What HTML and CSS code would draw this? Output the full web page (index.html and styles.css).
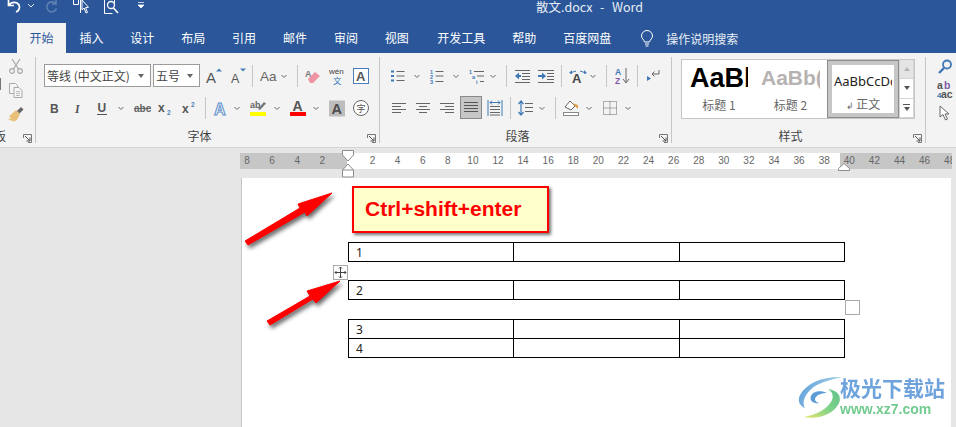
FILE: index.html
```html
<html>
  <head>
    <meta charset="utf-8" />
    <title>散文.docx - Word</title>
    <link rel="stylesheet" href="styles.css">
  </head>
  <body>
    <svg class="sprite">
      <symbol id="caret" viewBox="0 0 16 16"><path d="M5.500 7l2.500 2.500L10.500 7" fill="none" stroke="#666" stroke-width="1"/></symbol>
      <symbol id="launcher" viewBox="0 0 9 9"><path d="M.5 4V.5h8v8H5" fill="none" stroke="#777"/><path d="M2 2l5 5M7 3.500V7H3.500" fill="none" stroke="#555"/></symbol>
      <symbol id="lines-left" viewBox="0 0 16 16"><path d="M1 3.500h14M1 6.500h9M1 9.500h14M1 12.500h9" stroke="#666" fill="none"/></symbol>
      <symbol id="lines-center" viewBox="0 0 16 16"><path d="M1 3.500h14M4 6.500h8M1 9.500h14M4 12.500h8" stroke="#666" fill="none"/></symbol>
      <symbol id="lines-right" viewBox="0 0 16 16"><path d="M1 3.500h14M6 6.500h9M1 9.500h14M6 12.500h9" stroke="#666" fill="none"/></symbol>
    </svg>

    <!-- title bar -->
    <div class="titlebar">
      <div class="quick">
        <svg class="qa" width="16" height="14" viewBox="0 0 16 14"><path d="M2.500 0v5.500H8M3 5C5.500 1.500 11 1.500 13 5c1.500 3-.5 6-3 7" fill="none" stroke="#fff" stroke-width="1.700"/></svg>
        <svg class="qa caret-w" width="8" height="14" viewBox="0 0 8 14"><path d="M1 4l3 3 3-3" fill="none" stroke="#dfe6f1"/></svg>
        <svg class="qa redo" width="14" height="14" viewBox="0 0 14 14"><path d="M11 0v4H7M10.500 3.500a5 5 0 1 0 1 5" fill="none" stroke="#5f80b4" stroke-width="1.600"/></svg>
        <svg class="qa touch" width="18" height="15" viewBox="0 0 18 15"><path d="M1.500 0v4.500h5V0M8.500 0v13M10 0l0 10 2-2 2 5 1.500-.6-2-4.800 3-.3z" fill="none" stroke="#fff"/></svg>
        <svg class="qa preview" width="17" height="15" viewBox="0 0 17 15"><path d="M1.500 0v13.500h8M11.500 0v3" fill="none" stroke="#fff"/><circle cx="8" cy="5" r="3.500" fill="none" stroke="#fff" stroke-width="1.300"/><path d="M10.500 8l4.500 5" stroke="#fff" stroke-width="1.600"/></svg>
        <svg class="qa more" width="8" height="10" viewBox="0 0 8 10"><path d="M1 2.500h6M1 5h6l-3 3z" fill="#fff" stroke="#fff" stroke-width=".7"/></svg>
      </div>
      <div class="doc-name">散文.docx &nbsp;-&nbsp; Word</div>
    </div>

    <!-- tabs -->
    <div class="tabs">
      <span class="tab active">开始</span>
      <span class="tab">插入</span>
      <span class="tab">设计</span>
      <span class="tab">布局</span>
      <span class="tab">引用</span>
      <span class="tab">邮件</span>
      <span class="tab">审阅</span>
      <span class="tab">视图</span>
      <span class="tab wide">开发工具</span>
      <span class="tab help">帮助</span>
      <span class="tab wide">百度网盘</span>
      <svg class="bulb" width="14" height="17" viewBox="0 0 14 17"><path d="M4.500 12C4 9.500 1.500 8.500 1.500 6a5.500 5.500 0 0 1 11 0c0 2.500-2.500 3.500-3 6zM5 14h4M5.500 16h3" fill="none" stroke="#fff"/></svg>
      <span class="tell-me">操作说明搜索</span>
    </div>

    <!-- ribbon -->
    <div class="ribbon">
      <section class="group clipboard">
        <div class="clip-stack">
          <svg width="16" height="16" viewBox="0 0 16 16"><path d="M4 1l6.500 10M12 1L5.500 11" stroke="#a9a9a9" stroke-width="1.300" fill="none"/><circle cx="4" cy="13" r="2.300" fill="none" stroke="#a9a9a9" stroke-width="1.200"/><circle cx="12" cy="13" r="2.300" fill="none" stroke="#a9a9a9" stroke-width="1.200"/></svg>
          <svg width="16" height="16" viewBox="0 0 16 16"><path d="M1.500 1.500h6l2 2v2M1.500 1.500v10h4M6 5.500h5l3 3v7H6z" fill="#f7f7f7" stroke="#aaa"/><path d="M8 9.500h4M8 11.500h4M8 13.500h4" stroke="#bbb"/></svg>
          <svg width="16" height="16" viewBox="0 0 16 16"><path d="M8 4l4 4-3 6-3 1.500-6-2 3-1.500-2-1.500z" fill="#e8c078"/><path d="M9 5l4-4 2.500 2.500-4 4z" fill="#666"/></svg>
        </div>
        <span class="cut-label">板</span>
        <svg class="launcher"><use href="#launcher"/></svg>
      </section>

      <section class="group font-group">
        <div class="tools font-row-1">
          <div class="combo"><span>等线 (中文正文)</span><i class="combo-arrow"></i></div>
          <div class="combo"><span>五号</span><i class="combo-arrow"></i></div>
          <svg width="16" height="16" viewBox="0 0 16 16"><text x="0" y="15" class="plain" font-size="15" fill="#555">A</text><path d="M10 3.500l3-3 3 3z" fill="#4a7ebb"/></svg>
          <svg width="16" height="16" viewBox="0 0 16 16"><text x="1" y="15" class="plain" font-size="12.500" fill="#555">A</text><path d="M10 .5h6l-3 3z" fill="#4a7ebb"/></svg>
          <i class="sep"></i>
          <svg width="16" height="16" viewBox="0 0 16 16"><text x="0" y="13" class="plain" font-size="13.500" fill="#666">Aa</text></svg>
          <svg width="16" height="16"><use href="#caret"/></svg>
          <i class="sep"></i>
          <svg width="16" height="16" viewBox="0 0 16 16"><text x="0" y="9" class="glyph" font-size="9" fill="#777">A</text><path d="M3 11l7-7 5 4-7 7H5z" fill="#ee93a3"/></svg>
          <svg width="18" height="18" viewBox="0 0 18 18"><text x="0" y="7" class="plain" font-size="8" fill="#444">wén</text><text x="4" y="17" class="cjk" font-size="8.500" fill="#2f75b5">文</text></svg>
          <svg width="16" height="16" viewBox="0 0 16 16"><rect x=".5" y=".5" width="15" height="15" fill="#fff" stroke="#4a7ebb"/><text x="3" y="13" class="glyph" font-size="13" fill="#555">A</text></svg>
        </div>
        <div class="tools font-row-2">
          <svg width="16" height="16" viewBox="0 0 16 16"><text x="4" y="13" class="glyph" font-size="12" fill="#555">B</text></svg>
          <svg width="16" height="16" viewBox="0 0 16 16"><text x="5" y="13" class="glyph-i" font-size="12" fill="#555">I</text></svg>
          <svg width="16" height="16" viewBox="0 0 16 16"><text x="3.500" y="12" class="glyph" font-size="12" fill="#555">U</text><path d="M3 14.500h10" stroke="#555"/></svg>
          <svg width="16" height="16"><use href="#caret"/></svg>
          <svg width="18" height="16" viewBox="0 0 18 16"><text x="0" y="12" class="glyph" font-size="10" fill="#666">abc</text><path d="M0 8.500h17" stroke="#666"/></svg>
          <svg width="16" height="16" viewBox="0 0 16 16"><text x="1" y="12" class="glyph" font-size="12" fill="#555">x</text><text x="10" y="15" class="glyph" font-size="6.500" fill="#4a7ebb">2</text></svg>
          <svg width="16" height="16" viewBox="0 0 16 16"><text x="1" y="13" class="glyph" font-size="12" fill="#555">x</text><text x="10" y="7" class="glyph" font-size="6.500" fill="#4a7ebb">2</text></svg>
          <i class="sep"></i>
          <svg width="16" height="16" viewBox="0 0 16 16"><text x="1" y="14.500" class="glyph" font-size="16" fill="#fff" stroke="#5b8ec9" stroke-width="1">A</text></svg>
          <svg width="16" height="16"><use href="#caret"/></svg>
          <svg width="16" height="18" viewBox="0 0 16 18"><rect y="13" width="16" height="4" fill="#ff0"/><text x="0" y="9" class="glyph" font-size="9" fill="#666">ab</text><path d="M8 10l6-7 2 1.500-6 6.500z" fill="#777"/></svg>
          <svg width="16" height="16"><use href="#caret"/></svg>
          <svg width="16" height="18" viewBox="0 0 16 18"><rect y="13" width="16" height="4" fill="#f00"/><text x="2.500" y="12" class="glyph" font-size="14" fill="#555">A</text></svg>
          <svg width="16" height="16"><use href="#caret"/></svg>
          <svg width="16" height="16" viewBox="0 0 16 16"><rect width="16" height="16" y=".5" fill="#bdbdbd"/><text x="2.500" y="14" class="glyph" font-size="14.500" fill="#4d4d4d">A</text></svg>
          <svg width="16" height="16" viewBox="0 0 16 16"><circle cx="8" cy="8" r="7.500" fill="#fff" stroke="#666"/><text x="3.500" y="12" class="cjk" font-size="9" fill="#555">字</text></svg>
        </div>
        <div class="group-label">字体</div>
        <svg class="launcher"><use href="#launcher"/></svg>
      </section>

      <section class="group para-group">
        <div class="tools para-row-1">
          <svg width="16" height="16" viewBox="0 0 16 16"><path d="M1 2.500h3v2H1zM1 7h3v2H1zM1 11.500h3v2H1z" fill="#3f78b5"/><path d="M6.500 3.500h8M6.500 8h8M6.500 12.500h8" stroke="#666"/></svg>
          <svg width="16" height="16"><use href="#caret"/></svg>
          <svg width="16" height="16" viewBox="0 0 16 16"><text x="1" y="6" class="num" fill="#3f78b5">1</text><text x="1" y="11" class="num" fill="#3f78b5">2</text><text x="1" y="16" class="num" fill="#3f78b5">3</text><path d="M6.500 3.500h8M6.500 8h8M6.500 13.500h8" stroke="#666"/></svg>
          <svg width="16" height="16"><use href="#caret"/></svg>
          <svg width="16" height="16" viewBox="0 0 16 16"><text x="0" y="6" class="num" fill="#3f78b5">1</text><text x="3" y="11" class="num" fill="#3f78b5">a</text><text x="7" y="16" class="num" fill="#3f78b5">i</text><path d="M5 3.500h10M8 8h7M11 13.500h4" stroke="#666"/></svg>
          <svg width="16" height="16"><use href="#caret"/></svg>
          <i class="sep"></i>
          <svg width="16" height="16" viewBox="0 0 16 16"><path d="M1 8l4-3.500v7z" fill="#3f78b5"/><path d="M4 8h3" stroke="#3f78b5" stroke-width="2"/><path d="M1 2.500h15M8 5.500h8M8 8.500h8M8 11.500h8M1 14.500h15" stroke="#666"/></svg>
          <svg width="16" height="16" viewBox="0 0 16 16"><path d="M7 8L3 4.500v7z" transform="translate(1)" fill="#3f78b5"/><path d="M0 8h4" stroke="#3f78b5" stroke-width="2"/><path d="M0 2.500h16M9 5.500h7M9 8.500h7M9 11.500h7M0 14.500h16" stroke="#666"/></svg>
          <i class="sep"></i>
          <svg width="18" height="16" viewBox="0 0 18 16"><text x="3" y="15" class="glyph" font-size="13" fill="#444">A</text><path d="M1 5l6-2M17 5l-6-2" stroke="#3f78b5" fill="none"/><path d="M0 5l3-3v4zM18 5l-3-3v4z" fill="#3f78b5"/></svg>
          <svg width="16" height="16"><use href="#caret"/></svg>
          <i class="sep"></i>
          <svg width="16" height="18" viewBox="0 0 16 18"><text x="1" y="8" class="glyph" font-size="8.500" fill="#3f78b5">A</text><text x="1" y="17" class="glyph" font-size="8.500" fill="#7f57a6">Z</text><path d="M12 1v14M9 12l3 4 3-4" stroke="#666" fill="none"/></svg>
          <i class="sep"></i>
          <svg width="16" height="16" viewBox="0 0 16 16"><path d="M14 2v4H7M9.500 3.500L7 6l2.500 2.500" stroke="#666" fill="none"/><path d="M2 13l4-2.500-4-2.500z" fill="#3f78b5"/></svg>
        </div>
        <div class="tools para-row-2">
          <svg width="16" height="16"><use href="#lines-left"/></svg>
          <svg width="16" height="16"><use href="#lines-center"/></svg>
          <svg width="16" height="16"><use href="#lines-right"/></svg>
          <svg class="selected-align" width="22" height="23" viewBox="0 0 22 23"><rect x=".5" y=".5" width="21" height="22" fill="#c6c6c6" stroke="#8a8a8a"/><path d="M4 6.500h14M4 9.500h14M4 12.500h14M4 15.500h14" stroke="#555"/></svg>
          <svg width="16" height="16" viewBox="0 0 16 16"><path d="M1 0v16M15 0v16" stroke="#3f78b5"/><path d="M3 2.500h10M3 2.500l2-2M3 2.500l2 2M13 2.500l-2-2M13 2.500l-2 2" stroke="#3f78b5" fill="none"/><path d="M3 6.500h10M3 9.500h10M3 12.500h10M3 15h10" stroke="#666"/></svg>
          <i class="sep"></i>
          <svg width="16" height="16" viewBox="0 0 16 16"><path d="M3 1v14M.5 4L3 1l2.500 3M.5 12L3 15l2.500-3" stroke="#3f78b5" fill="none" stroke-width="1.200"/><path d="M7 3.500h8M7 7.500h8M7 11.500h8" stroke="#666"/></svg>
          <svg width="16" height="16"><use href="#caret"/></svg>
          <i class="sep"></i>
          <svg width="16" height="18" viewBox="0 0 16 18"><rect x=".5" y="13.500" width="15" height="3" fill="#fff" stroke="#888"/><path d="M2 8l5-6 5 5-4 4z" fill="#fff" stroke="#666"/><path d="M9 4l4 4 2 2V6z" fill="#e3a04c"/></svg>
          <svg width="16" height="16"><use href="#caret"/></svg>
          <svg width="14" height="14" viewBox="0 0 14 14"><path d="M.5.500h13v13H.5zM7 .5v13M.5 7h13" fill="none" stroke="#666" stroke-dasharray="1 1"/></svg>
          <svg width="16" height="16"><use href="#caret"/></svg>
        </div>
        <div class="group-label">段落</div>
        <svg class="launcher"><use href="#launcher"/></svg>
      </section>

      <section class="group styles-group">
        <div class="gallery">
          <div class="style-item heading-1">
            <div class="sample">AaBb</div>
            <div class="caption">标题 1</div>
          </div>
          <div class="style-item heading-2">
            <div class="sample">AaBb(</div>
            <div class="caption">标题 2</div>
          </div>
          <div class="style-item normal">
            <div class="sample">AaBbCcDd</div>
            <div class="caption"><span class="para-mark">↲</span> 正文</div>
          </div>
          <div class="gallery-scroll">
            <span class="scroll-btn off"><i class="up"></i></span>
            <span class="scroll-btn"><i class="down"></i></span>
            <span class="scroll-btn more"><i class="down"></i></span>
          </div>
        </div>
        <div class="group-label">样式</div>
        <svg class="launcher"><use href="#launcher"/></svg>
      </section>

      <section class="group editing">
        <div class="clip-stack">
          <svg width="16" height="16" viewBox="0 0 16 16"><circle cx="10" cy="5.500" r="4" fill="none" stroke="#3f78b5" stroke-width="1.800"/><path d="M7 9l-5 5" stroke="#3f78b5" stroke-width="2.400"/></svg>
          <svg width="16" height="18" viewBox="0 0 16 18"><text x="0" y="8" class="glyph" font-size="10.500" fill="#555">a</text><text x="7" y="8" class="glyph" font-size="10.500" fill="#7f57a6">b</text><text x="0" y="17" class="glyph" font-size="8" fill="#3f78b5">4</text><text x="4" y="17" class="glyph" font-size="10.500" fill="#555">ac</text></svg>
          <svg width="14" height="16" viewBox="0 0 14 16"><path d="M2 1v11l3-2.500 2.500 5.500 2-1-2.500-5h4z" fill="#fff" stroke="#666"/></svg>
        </div>
      </section>
    </div>

    <!-- document area -->
    <div class="workspace">
      <div class="ruler-wrap">
        <div class="ruler">
          <span>8</span><span>6</span><span>4</span><span>2</span><span></span>
          <span>2</span><span>4</span><span>6</span><span>8</span><span>10</span><span>12</span>
          <span>14</span><span>16</span><span>18</span><span>20</span><span>22</span><span>24</span>
          <span>26</span><span>28</span><span>30</span><span>32</span><span>34</span><span>36</span>
          <span>38</span><span>40</span><span>42</span><span>44</span><span>46</span><span>48</span>
        </div>
        <svg class="indent-marker" width="12" height="28" viewBox="0 0 12 28"><path d="M.5.500h11V5L6 11 .5 5zM6 14l5.500 6v7H.5v-7zM.5 20h11" fill="#fff" stroke="#8d8d8d"/></svg>
        <svg class="right-marker" width="12" height="8" viewBox="0 0 12 8"><path d="M6 .5l5.500 5v2H.5v-2z" fill="#fff" stroke="#8d8d8d"/></svg>
      </div>

      <div class="page">
        <table class="word-table first">
          <tr><td>1</td><td></td><td></td></tr>
        </table>
        <table class="word-table second">
          <tr><td>2</td><td></td><td></td></tr>
        </table>
        <table class="word-table third">
          <tr><td>3</td><td></td><td></td></tr>
          <tr><td>4</td><td></td><td></td></tr>
        </table>

        <div class="callout">Ctrl+shift+enter</div>
        <div class="move-handle">
          <svg width="11" height="11" viewBox="0 0 11 11"><path d="M5.500 0v11M0 5.500h11M4 1.500L5.500 0 7 1.500M4 9.500L5.500 11 7 9.500M1.500 4L0 5.500 1.500 7M9.500 4L11 5.500 9.500 7" fill="none" stroke="#444"/></svg>
        </div>
        <div class="resize-handle"></div>

        <div class="watermark">
          <svg class="swirl" width="46" height="44" viewBox="0 0 46 44">
            <defs>
              <linearGradient id="sweep" x1="0" y1="0" x2="1" y2="0.300">
                <stop offset="0" stop-color="#5b9bd8"/>
                <stop offset="1" stop-color="#a9d6e8"/>
              </linearGradient>
              <linearGradient id="leaf" x1="0" y1="1" x2="1" y2="0">
                <stop offset="0" stop-color="#e6e66a"/>
                <stop offset="0.500" stop-color="#7fd28a"/>
                <stop offset="1" stop-color="#5fc28a"/>
              </linearGradient>
            </defs>
            <path d="M45 1C28 0 10 6 3 19c-3 6 0 11 5 13C4 26 9 15 20 9 28 5 37 3 45 1z" fill="url(#sweep)"/>
            <path d="M7 41c14 3 30-3 35-14 3-7-2-13-11-14 5 3 6 8 3 13-5 8-16 13-27 15z" fill="url(#leaf)"/>
            <path d="M30 17c-6-3-14-2-16 3s3 8 8 7c-4-1-5-4-3-6 2-3 7-4 11-4z" fill="#5d9bd6"/>
          </svg>
          <div class="wm-text">
            <div class="wm-name">极光下载站</div>
            <div class="wm-url">www.xz7.com</div>
          </div>
        </div>
      </div>

      <svg class="arrows" width="956" height="279" viewBox="0 148 956 279">
        <polygon points="245,241 300,208 298,204 332,193 307,216 305,212 248,245" />
        <polygon points="267,321 310,296 307,291 340,281 316,303 313,299 270,325" />
      </svg>
    </div>
  </body>
</html>
```

FILE: styles.css
```css
* {
  box-sizing: border-box;
}

html,
body {
  margin: 0;
  height: 427px;
  overflow: hidden;
}

body {
  font-family: "Noto Sans CJK SC", "Liberation Sans", sans-serif;
  font-size: 12px;
  background: #e6e6e6;
}

.sprite {
  display: none;
}

svg {
  display: block;
  overflow: visible;
}

.glyph {
  font-family: "Liberation Sans", sans-serif;
  font-weight: bold;
}

.glyph-i {
  font-family: "Liberation Serif", serif;
  font-style: italic;
  font-weight: bold;
}

.plain {
  font-family: "Liberation Sans", sans-serif;
}

.cjk {
  font-family: "Noto Sans CJK SC", sans-serif;
}

.num {
  font-family: "Liberation Sans", sans-serif;
  font-size: 5.5px;
  font-weight: bold;
}

/* title bar */
.titlebar {
  height: 23px;
  background: #2b579a;
  color: #fff;
  position: relative;
  overflow: hidden;
}

.quick {
  display: flex;
  align-items: flex-start;
  padding-left: 6px;
}

.qa.caret-w {
  margin-left: 5px;
}

.qa.redo {
  margin-left: 10px;
}

.qa.touch {
  margin-left: 13px;
}

.qa.preview {
  margin-left: 13px;
}

.qa.more {
  margin-left: 17px;
}

.doc-name {
  position: absolute;
  top: -2px;
  left: 536px;
  line-height: 17px;
  font-size: 12.5px;
  word-spacing: 1px;
  color: #e8edf5;
}

/* tabs */
.tabs {
  height: 30px;
  background: #2b579a;
  display: flex;
  align-items: center;
  padding-left: 17px;
}

.tab {
  width: 50.9px;
  height: 30px;
  line-height: 29px;
  text-align: center;
  color: #fff;
  font-size: 12px;
}

.tab.active {
  width: 49px;
  background: #f3f3f3;
  color: #2b579a;
}

.tab.wide {
  width: 78px;
}

.tab.help {
  width: 48px;
}

.bulb {
  margin-left: 14px;
  margin-right: 12px;
}

.tell-me {
  color: #e8edf5;
  font-size: 12px;
}

/* ribbon */
.ribbon {
  height: 95px;
  background: #f3f3f3;
  border-bottom: 1px solid #d4d4d4;
  display: flex;
  padding-top: 4px;
}

.group {
  position: relative;
  flex: none;
  height: 86px;
  border-right: 1px solid #c6c6c6;
  padding-top: 7px;
}

.clipboard {
  width: 36px;
  padding-top: 1px;
}

/* edge of the paste button, scrolled out of view */
.clipboard::before {
  content: "";
  position: absolute;
  left: 0;
  top: 21px;
  width: 1px;
  height: 12px;
  background: #777;
}

.font-group {
  width: 344px;
}

.para-group {
  width: 292px;
}

.styles-group {
  width: 254px;
  padding-top: 2px;
}

.editing {
  width: 30px;
  border-right: 0;
  padding-top: 0;
}

.clip-stack {
  display: flex;
  flex-direction: column;
  align-items: center;
  gap: 8px;
  width: 32px;
}

.editing .clip-stack {
  margin-left: 3px;
  padding-top: 2px;
  gap: 6px;
}

.cut-label {
  position: absolute;
  left: -6px;
  bottom: -1px;
  line-height: 16px;
  color: #444;
}

.launcher {
  position: absolute;
  width: 9px;
  height: 9px;
  right: 3px;
  bottom: 0;
}

.tools {
  display: grid;
  grid-auto-flow: column;
  justify-content: start;
  align-items: center;
  height: 23px;
}

.font-row-1 {
  margin-left: 8px;
  grid-template-columns: 109px 53px 24px 14px 16px 16px 13px 16px 24px 24px 16px;
}

.font-row-2 {
  margin-left: 10px;
  margin-top: 9px;
  grid-template-columns: 24px 24px 19px 21px 23px 24px 16px 16px 16px 21px 19px 21px 18px 21px 24px 16px;
}

.para-row-1 {
  margin-left: 10px;
  grid-template-columns: 19px 20px 19px 21px 16px 13px 16px 24px 15px 16px 16px 13px 16px 15px 16px 16px;
}

.para-row-2 {
  margin-left: 11px;
  margin-top: 9px;
  grid-template-columns: 24px 24px 21px 27px 15px 16px 16px 13px 16px 18px 22px 17px 16px;
}

.sep {
  display: block;
  width: 1px;
  height: 22px;
  margin-left: 8px;
  background: #c6c6c6;
}

.combo {
  display: flex;
  align-items: center;
  justify-content: space-between;
  height: 23px;
  padding: 0 6px 0 2px;
  background: #fff;
  border: 1px solid #9b9b9b;
  color: #444;
  font-size: 12px;
  white-space: nowrap;
}

.font-row-1 .combo:nth-child(1) {
  width: 107px;
}

.font-row-1 .combo:nth-child(2) {
  width: 47px;
}

.combo-arrow {
  width: 0;
  height: 0;
  border: 3.5px solid transparent;
  border-top: 4px solid #666;
  border-bottom: 0;
}

.group-label {
  position: absolute;
  left: 0;
  right: 16px;
  top: 71px;
  line-height: 16px;
  text-align: center;
  color: #444;
}

/* style gallery */
.gallery {
  display: flex;
  width: 234px;
  height: 60px;
  margin-left: 9px;
  background: #fff;
  border: 1px solid #c6c6c6;
}

.style-item {
  height: 58px;
  overflow: hidden;
  text-align: center;
}

.sample {
  font-family: "Liberation Sans", sans-serif;
  white-space: nowrap;
  overflow: hidden;
  text-align: left;
}

.caption {
  color: #666;
  font-size: 12px;
  line-height: 16px;
}

.heading-1 {
  width: 78px;
  padding-left: 8px;
}

.heading-1 .sample {
  width: 58px;
  height: 36px;
  padding-top: 2px;
  font-size: 27px;
  line-height: 32px;
  font-weight: bold;
  color: #000;
}

.heading-1 .caption {
  width: 58px;
  margin-top: 1px;
}

.heading-2 {
  width: 67px;
  padding-left: 1px;
}

.heading-2 .sample {
  width: 59px;
  height: 36px;
  padding-top: 3px;
  font-size: 21px;
  line-height: 30px;
  font-weight: bold;
  color: #b7b2b2;
}

.heading-2 .caption {
  width: 59px;
  margin-top: 1px;
}

.normal {
  width: 72px;
  border: 1px solid #8c8c8c;
  outline: 4px solid #c6c6c6;
  outline-offset: -5px;
  padding: 5px 6px 0;
}

.normal .sample {
  width: 58px;
  height: 30px;
  font-family: "Noto Sans", sans-serif;
  font-size: 13px;
  line-height: 30px;
  color: #222;
}

.para-mark {
  font-size: 9px;
}

.gallery-scroll {
  width: 15px;
  display: flex;
  flex-direction: column;
  margin-left: auto;
}

.scroll-btn {
  flex: 1;
  display: flex;
  align-items: center;
  justify-content: center;
  border: 1px solid #d4d4d4;
  border-top: 0;
}

.scroll-btn.off {
  background: #e4e4e4;
}

.scroll-btn i {
  width: 0;
  height: 0;
  border: 3.5px solid transparent;
}

.scroll-btn .up {
  border-bottom: 4px solid #b5b5b5;
  border-top: 0;
}

.scroll-btn .down {
  border-top: 4px solid #555;
  border-bottom: 0;
}

.scroll-btn.more {
  flex-direction: column;
  gap: 2px;
}

.scroll-btn.more::before {
  content: "";
  width: 7px;
  height: 1px;
  background: #555;
}

/* ruler and page */
.workspace {
  position: relative;
  height: 279px;
}

.ruler-wrap {
  position: relative;
  padding-top: 5px;
}

.ruler {
  display: flex;
  height: 16px;
  margin-left: 240px;
  width: 712px;
  overflow: hidden;
  background: linear-gradient(to right, #c6c6c6 107px, #fff 107px, #fff 600px, #c6c6c6 600px);
  font-family: "Liberation Sans", sans-serif;
  font-size: 10px;
  line-height: 16px;
  color: #666;
}

.ruler span {
  flex: 0 0 25.1px;
  text-align: center;
}

.ruler span:first-child {
  margin-left: -5.5px;
}

.indent-marker {
  position: absolute;
  left: 342px;
  top: 2px;
}

.right-marker {
  position: absolute;
  left: 838px;
  top: 15px;
}

.page {
  position: relative;
  width: 710px;
  height: 249px;
  margin-left: 241px;
  margin-top: 9px;
  padding-top: 64px;
  padding-left: 106px;
  background: #fff;
  border-left: 1px solid #c6c6c6;
  overflow: hidden;
}

.word-table {
  width: 497px;
  table-layout: fixed;
  border-collapse: collapse;
  font-family: "Noto Sans", sans-serif;
  font-size: 12px;
  color: #222;
}

.word-table td {
  height: 19px;
  padding: 0 0 0 7px;
  line-height: 17px;
  border: 1px solid #000;
}

.word-table.second {
  margin-top: 18px;
}

.word-table.third {
  margin-top: 19px;
}

.callout {
  position: absolute;
  left: 110px;
  top: 8px;
  width: 197px;
  height: 47px;
  padding-left: 11px;
  background: #ffffcc;
  border: 2px solid #f00;
  box-shadow: 2px 2px 3px rgba(0, 0, 0, 0.55);
  color: #f00;
  font-family: "Liberation Sans", sans-serif;
  font-size: 21px;
  font-weight: bold;
  line-height: 41px;
}

.move-handle {
  position: absolute;
  left: 91px;
  top: 87px;
  width: 15px;
  height: 15px;
  display: flex;
  align-items: center;
  justify-content: center;
  background: #fff;
  border: 1px solid #aaa;
}

.resize-handle {
  position: absolute;
  left: 603px;
  top: 122px;
  width: 15px;
  height: 15px;
  background: #fff;
  border: 1px solid #aaa;
}

.watermark {
  position: absolute;
  left: 555px;
  top: 198px;
  display: flex;
  filter: blur(0.4px);
}

.wm-text {
  margin-left: -3px;
  margin-top: -2px;
}

.wm-name {
  font-size: 21px;
  line-height: 26px;
  font-weight: bold;
  color: #6fa3dc;
  white-space: nowrap;
}

.wm-url {
  font-family: "Liberation Sans", sans-serif;
  font-size: 14px;
  font-weight: bold;
  line-height: 18px;
  color: #72cb8f;
}

.arrows {
  position: absolute;
  left: 0;
  top: 0;
  filter: drop-shadow(2px 3px 2px rgba(0, 0, 0, 0.6));
}

.arrows polygon {
  fill: #f00;
  stroke: #f00;
  stroke-width: 1;
  stroke-linejoin: round;
}
```
